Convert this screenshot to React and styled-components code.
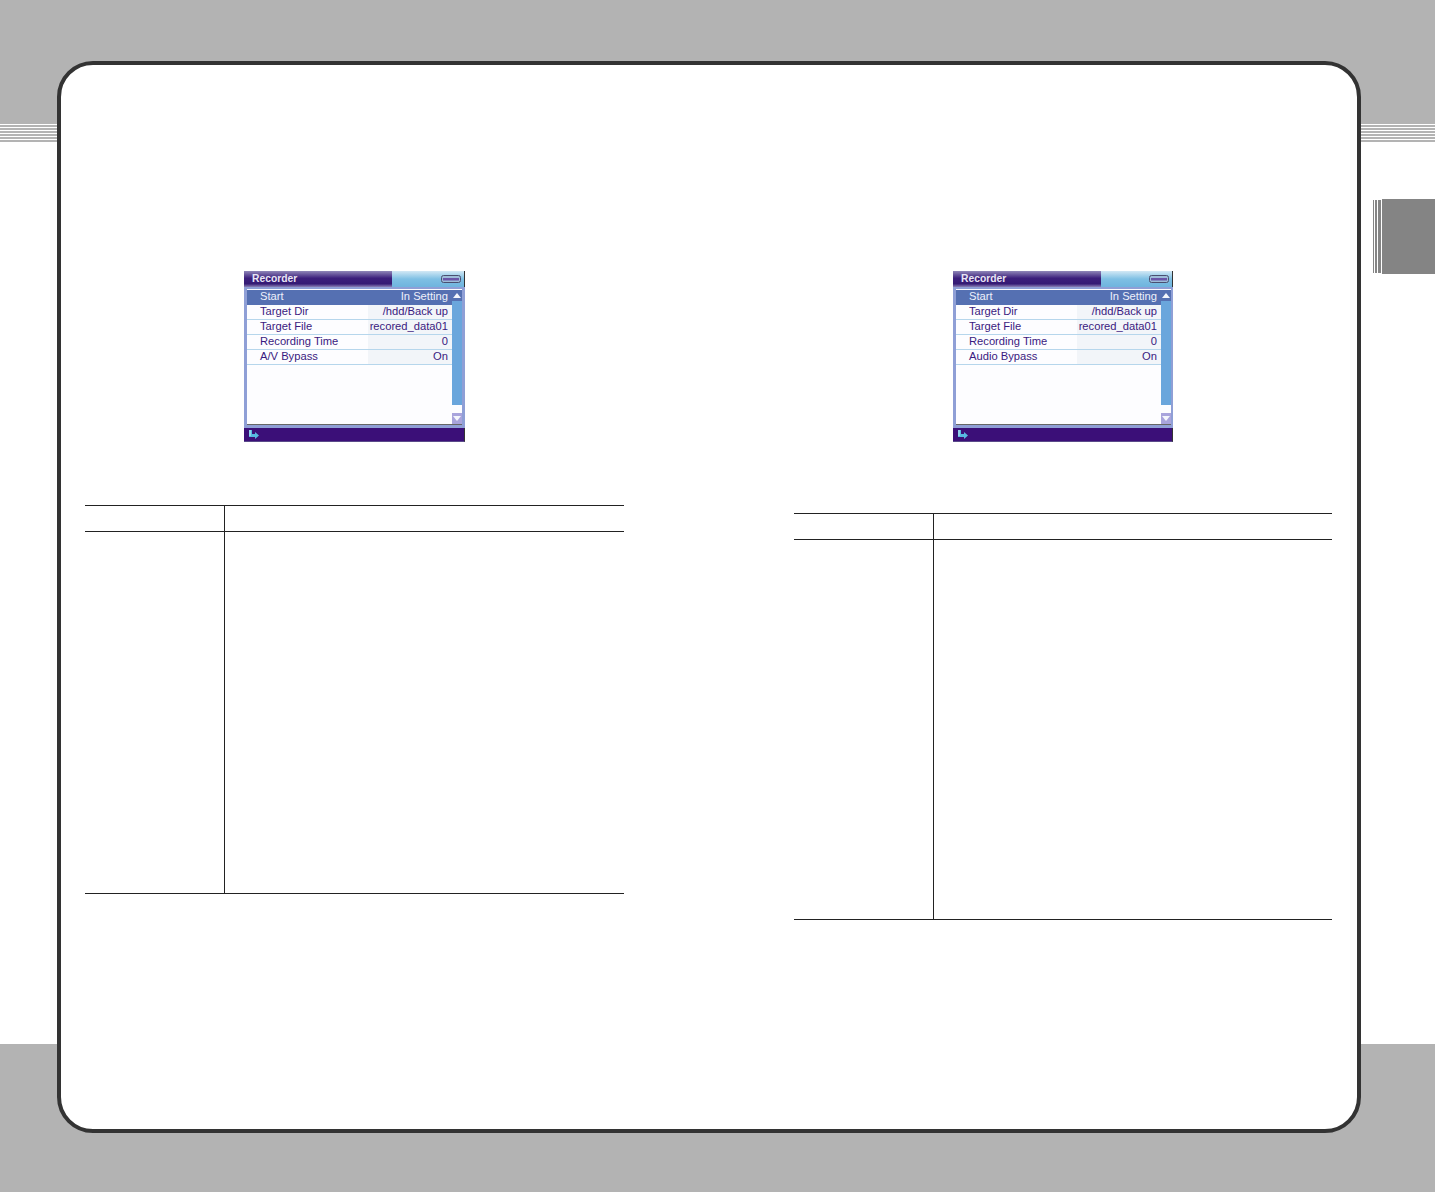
import React from "react";
import styled, { createGlobalStyle } from "styled-components";

const Global = createGlobalStyle`
  html, body { margin: 0; padding: 0; background: #fff; }
  body { font-family: "Liberation Sans", Arial, sans-serif; }
`;

const Sheet = styled.div`
  position: relative;
  width: 1435px;
  height: 1192px;
  overflow: hidden;
  background: #fff;
  display: flex;
  flex-direction: column;
`;
const TopBand = styled.div`
  height: 124px;
  background: #b3b3b3;
`;
const Stripes = styled.div`
  height: 19px;
  background: repeating-linear-gradient(to bottom, #fff 0, #fff 1px, #b3b3b3 1px, #b3b3b3 3px);
`;
const Spacer = styled.div`
  flex: 1;
`;
const BottomBand = styled.div`
  height: 148px;
  background: #b3b3b3;
`;
const SideTab = styled.div`
  position: absolute;
  left: 1373px;
  top: 199px;
  width: 62px;
  height: 75px;
  display: flex;
  align-items: center;
`;
const TabLine = styled.div`
  width: ${(p) => p.$w}px;
  margin-right: 1px;
  height: 73px;
  background: #858585;
`;
const TabBlock = styled.div`
  flex: 1;
  height: 75px;
  background: #848484;
`;
const Card = styled.div`
  position: absolute;
  left: 57px;
  top: 61px;
  width: 1304px;
  height: 1072px;
  box-sizing: border-box;
  border: 4px solid #333;
  border-radius: 36px;
  background: #fff;
  display: grid;
  grid-template-columns: 539px 538px;
  column-gap: 170px;
  padding: 206px 0 0 24px;
  align-items: start;
`;
const Column = styled.section`
  display: flex;
  flex-direction: column;
`;
const Win = styled.div`
  width: ${(p) => p.$width}px;
  height: 171px;
  margin-left: 159px;
  margin-bottom: ${(p) => p.$below}px;
  display: flex;
  flex-direction: column;
  background: #8f9fd6;
  font-size: 11.2px;
  color: #3a1a80;
`;
const TitleBar = styled.div`
  height: 16px;
  display: flex;
  background: #3a1a78;
`;
const TitleText = styled.div`
  width: 140px;
  padding-left: 8px;
  font-size: 10.3px;
  font-weight: bold;
  line-height: 16px;
  color: #e9e6f5;
  background: linear-gradient(to bottom, #8f86b8 0, #3c1f7c 45%, #351a74 80%, #8a80b5 100%);
`;
const TitleRight = styled.div`
  flex: 1;
  display: flex;
  align-items: center;
  justify-content: flex-end;
  padding-right: 3px;
  border-right: 1px solid #333;
  background: linear-gradient(to bottom, #d2e8f5 0, #7fc0e4 50%, #6fb4de 100%);
`;
const Body = styled.div`
  width: 215px;
  height: 136px;
  margin: 2px 0 3px 3px;
  display: flex;
  background: #fdfdff;
  border-bottom: 1px solid #666;
`;
const List = styled.div`
  flex: 1;
  padding-top: 1px;
  display: flex;
  flex-direction: column;
`;
const Row = styled.div`
  height: 15px;
  box-sizing: border-box;
  display: flex;
  line-height: 12px;
  border-bottom: 1px solid ${(p) => (p.$active ? "#5570b2" : "#b6d6ec")};
  background: ${(p) => (p.$active ? "#5570b2" : "transparent")};
  color: ${(p) => (p.$active ? "#eef1fb" : "inherit")};
`;
const Label = styled.div`
  width: 121px;
  box-sizing: border-box;
  padding-left: 13px;
  white-space: nowrap;
`;
const Value = styled.div`
  flex: 1;
  padding-right: 4px;
  text-align: right;
  white-space: nowrap;
  background: ${(p) => (p.$active ? "transparent" : "#f2f5f9")};
`;
const Scroll = styled.div`
  width: 10px;
  padding-top: 1px;
  display: flex;
  flex-direction: column;
  background: #fdfdff;
`;
const ScrollBtn = styled.div`
  height: 11px;
  display: flex;
  align-items: center;
  justify-content: center;
  background: ${(p) => (p.$down ? "#a9a4dc" : "#5570b2")};
`;
const Track = styled.div`
  height: 104px;
  background: #6aa6dc;
`;
const ScrollGap = styled.div`
  height: 8px;
`;
const Status = styled.div`
  height: 14px;
  padding-left: 5px;
  display: flex;
  align-items: center;
  background: #3b0f78;
  border-right: 1px solid #333;
  border-bottom: 1px solid #5a4a8a;
  box-sizing: border-box;
`;
const SpecTable = styled.div`
  display: grid;
  grid-template-columns: 139px 1fr;
  grid-template-rows: 26px ${(p) => p.$rows}px;
  border-top: 1px solid #222;
  border-bottom: 1px solid #222;
`;
const HeadCell = styled.div`
  border-bottom: 1px solid #222;
  border-left: ${(p) => (p.$second ? "1px solid #222" : "0")};
`;
const BodyCell = styled.div`
  border-left: ${(p) => (p.$second ? "1px solid #222" : "0")};
`;

const Battery = () => (
  <svg width="20" height="8" viewBox="0 0 20 8">
    <rect x="0.5" y="0.5" width="19" height="7" rx="2" fill="#9dbcd8" stroke="#4a4f70" />
    <rect x="2" y="3" width="16" height="2.5" fill="#6a55a8" />
  </svg>
);
const UpArrow = () => (
  <svg width="8" height="5" viewBox="0 0 8 5">
    <path d="M4 0 L8 5 L0 5 Z" fill="#f4f6fc" />
  </svg>
);
const DownArrow = () => (
  <svg width="8" height="5" viewBox="0 0 8 5">
    <path d="M0 0 L8 0 L4 5 Z" fill="#f4f6fc" />
  </svg>
);
const EnterIcon = () => (
  <svg width="10" height="9" viewBox="0 0 10 9">
    <path d="M0 0 H3 V4 H6 V2 L10 5.5 L6 9 V7 H0 Z" fill="#57b8e0" />
    <path d="M1 0 V6" stroke="#c8e8f4" strokeWidth="1" />
  </svg>
);

const Recorder = ({ last, width, below }) => {
  const rows = [
    ["Target Dir", "/hdd/Back up"],
    ["Target File", "recored_data01"],
    ["Recording Time", "0"],
    [last, "On"],
  ];
  return (
    <Win $width={width} $below={below}>
      <TitleBar>
        <TitleText>Recorder</TitleText>
        <TitleRight>
          <Battery />
        </TitleRight>
      </TitleBar>
      <Body>
        <List>
          <Row $active>
            <Label>Start</Label>
            <Value $active>In Setting</Value>
          </Row>
          {rows.map(([l, v]) => (
            <Row key={l}>
              <Label>{l}</Label>
              <Value>{v}</Value>
            </Row>
          ))}
        </List>
        <Scroll>
          <ScrollBtn>
            <UpArrow />
          </ScrollBtn>
          <Track />
          <ScrollGap />
          <ScrollBtn $down>
            <DownArrow />
          </ScrollBtn>
        </Scroll>
      </Body>
      <Status>
        <EnterIcon />
      </Status>
    </Win>
  );
};

const Spec = ({ rows }) => (
  <SpecTable $rows={rows}>
    <HeadCell />
    <HeadCell $second />
    <BodyCell />
    <BodyCell $second />
  </SpecTable>
);

export default function App() {
  return (
    <Sheet>
      <Global />
      <TopBand />
      <Stripes />
      <Spacer />
      <BottomBand />
      <SideTab>
        <TabLine $w={1} />
        <TabLine $w={2} />
        <TabLine $w={3} />
        <TabBlock />
      </SideTab>
      <Card>
        <Column>
          <Recorder last="A/V Bypass" width={221} below={63} />
          <Spec rows={361} />
        </Column>
        <Column>
          <Recorder last="Audio Bypass" width={220} below={71} />
          <Spec rows={379} />
        </Column>
      </Card>
    </Sheet>
  );
}
